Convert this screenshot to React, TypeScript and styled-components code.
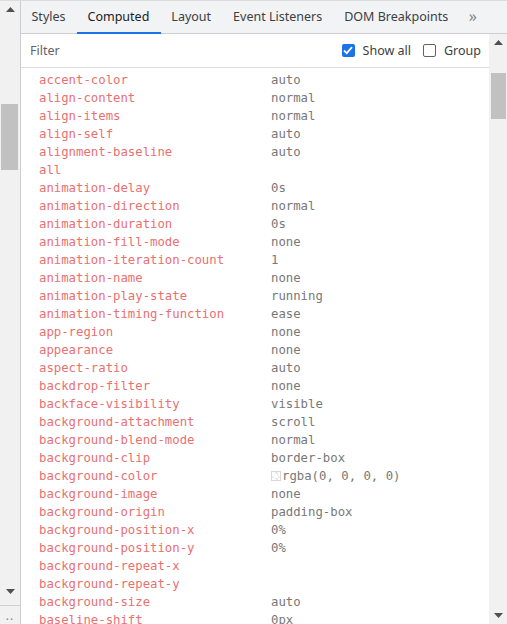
import styled, { createGlobalStyle } from 'styled-components';

const GlobalStyle = createGlobalStyle`
  html, body {
    margin: 0;
    padding: 0;
    background: #ffffff;
  }
  body {
    font-family: "Noto Sans", "Open Sans", sans-serif;
    overflow: hidden;
  }
`;

const tabs = ['Styles', 'Computed', 'Layout', 'Event Listeners', 'DOM Breakpoints'];

const props: [string, string, boolean?][] = [
  ['accent-color', 'auto'],
  ['align-content', 'normal'],
  ['align-items', 'normal'],
  ['align-self', 'auto'],
  ['alignment-baseline', 'auto'],
  ['all', ''],
  ['animation-delay', '0s'],
  ['animation-direction', 'normal'],
  ['animation-duration', '0s'],
  ['animation-fill-mode', 'none'],
  ['animation-iteration-count', '1'],
  ['animation-name', 'none'],
  ['animation-play-state', 'running'],
  ['animation-timing-function', 'ease'],
  ['app-region', 'none'],
  ['appearance', 'none'],
  ['aspect-ratio', 'auto'],
  ['backdrop-filter', 'none'],
  ['backface-visibility', 'visible'],
  ['background-attachment', 'scroll'],
  ['background-blend-mode', 'normal'],
  ['background-clip', 'border-box'],
  ['background-color', 'rgba(0, 0, 0, 0)', true],
  ['background-image', 'none'],
  ['background-origin', 'padding-box'],
  ['background-position-x', '0%'],
  ['background-position-y', '0%'],
  ['background-repeat-x', ''],
  ['background-repeat-y', ''],
  ['background-size', 'auto'],
  ['baseline-shift', '0px'],
];

const Arrow = ({ down }: { down?: boolean }) => (
  <svg width="9" height="6" viewBox="0 0 9 6">
    <path d={down ? 'M0 0 H9 L4.5 5 Z' : 'M0 5 H9 L4.5 0 Z'} fill="#505050" />
  </svg>
);

const App = () => {
  return (
    <Page>
      <GlobalStyle />
      <Gutter>
        <ArrowBox>
          <Arrow />
        </ArrowBox>
        <Track>
          <Thumb $top={86} $height={66} />
        </Track>
        <ArrowBox>
          <Arrow down />
        </ArrowBox>
        <GutterFoot>
          <Dots>··</Dots>
        </GutterFoot>
      </Gutter>
      <Main>
        <TabBar>
          {tabs.map((t) => (
            <Tab key={t} $active={t === 'Computed'}>
              {t}
            </Tab>
          ))}
          <More>»</More>
        </TabBar>
        <Body>
          <Content>
            <FilterRow>
              <FilterText>Filter</FilterText>
              <Options>
                <CheckLabel>
                  <CheckBox $checked>
                    <svg width="10" height="9" viewBox="0 0 10 9">
                      <path d="M1 4.5 L3.8 7.2 L9 1.2" stroke="#fff" strokeWidth="1.8" fill="none" />
                    </svg>
                  </CheckBox>
                  Show all
                </CheckLabel>
                <CheckLabel>
                  <CheckBox />
                  Group
                </CheckLabel>
              </Options>
            </FilterRow>
            <List>
              {props.map(([name, value, swatch]) => (
                <Row key={name}>
                  <PropName>{name}</PropName>
                  <PropValue>
                    {swatch && <Swatch />}
                    {value}
                  </PropValue>
                </Row>
              ))}
            </List>
          </Content>
          <VScroll>
            <ArrowBox>
              <Arrow />
            </ArrowBox>
            <Track>
              <Thumb $top={22} $height={46} $right />
            </Track>
            <ArrowBox>
              <Arrow down />
            </ArrowBox>
          </VScroll>
        </Body>
      </Main>
    </Page>
  );
};

export default App;

const Page = styled.div`
  display: flex;
  width: 507px;
  height: 624px;
  overflow: hidden;
  border-top: 1px solid #dadce0;
  box-sizing: border-box;
`;

const Gutter = styled.div`
  width: 20px;
  flex-shrink: 0;
  display: flex;
  flex-direction: column;
  background: #f1f1f1;
  border-right: 1px solid #cbcdd1;
`;

const ArrowBox = styled.div`
  height: 17px;
  display: flex;
  align-items: center;
  justify-content: center;
  flex-shrink: 0;
`;

const Track = styled.div`
  position: relative;
  flex: 1;
`;

const Thumb = styled.div<{ $top: number; $height: number; $right?: boolean }>`
  position: absolute;
  left: ${(p) => (p.$right ? '2px' : '1px')};
  right: ${(p) => (p.$right ? '1px' : '2px')};
  top: ${(p) => p.$top}px;
  height: ${(p) => p.$height}px;
  background: #c1c1c1;
`;

const GutterFoot = styled.div`
  height: 18px;
  border-top: 1px solid #d0d0d0;
  margin-top: 5px;
  display: flex;
  align-items: flex-end;
  justify-content: center;
`;

const Dots = styled.span`
  font-size: 12px;
  color: #888;
  line-height: 8px;
  letter-spacing: 1px;
`;

const Main = styled.div`
  flex: 1;
  display: flex;
  flex-direction: column;
  min-width: 0;
`;

const TabBar = styled.div`
  height: 32px;
  flex-shrink: 0;
  display: flex;
  align-items: stretch;
  background: #f1f3f4;
  border-bottom: 1px solid #cbcdd1;
`;

const Tab = styled.div<{ $active?: boolean }>`
  display: flex;
  align-items: center;
  padding: 0 11.5px 0 10.5px;
  font-size: 12.5px;
  color: ${(p) => (p.$active ? '#202124' : '#3c4043')};
  border-bottom: 2px solid ${(p) => (p.$active ? '#1a73e8' : 'transparent')};
  margin-bottom: -1px;
  white-space: nowrap;
`;

const More = styled.div`
  display: flex;
  align-items: center;
  padding: 0 10px 2px 9px;
  font-size: 16px;
  color: #80868b;
`;

const Body = styled.div`
  flex: 1;
  display: flex;
  min-height: 0;
`;

const Content = styled.div`
  flex: 1;
  display: flex;
  flex-direction: column;
  min-width: 0;
`;

const FilterRow = styled.div`
  height: 33px;
  flex-shrink: 0;
  display: flex;
  align-items: center;
  padding: 0 8px 0 9px;
  border-bottom: 1px solid #dadce0;
`;

const FilterText = styled.span`
  flex: 1;
  font-size: 12.5px;
  color: #5f6368;
`;

const Options = styled.div`
  display: flex;
  align-items: center;
  gap: 12px;
`;

const CheckLabel = styled.label`
  display: flex;
  align-items: center;
  gap: 8px;
  font-size: 12.5px;
  color: #3c4043;
`;

const CheckBox = styled.span<{ $checked?: boolean }>`
  width: 13px;
  height: 13px;
  box-sizing: border-box;
  border-radius: 2px;
  display: flex;
  align-items: center;
  justify-content: center;
  background: ${(p) => (p.$checked ? '#1a73e8' : '#fff')};
  border: ${(p) => (p.$checked ? 'none' : '1.5px solid #5f6368')};
`;

const List = styled.div`
  padding-top: 3px;
  overflow: hidden;
`;

const Row = styled.div`
  display: flex;
  height: 18px;
  align-items: center;
  padding-left: 18px;
  font-family: "DejaVu Sans Mono", "Liberation Mono", monospace;
  font-size: 12.3px;
  white-space: nowrap;
`;

const PropName = styled.span`
  width: 232px;
  flex-shrink: 0;
  color: #e97070;
`;

const PropValue = styled.span`
  display: flex;
  align-items: center;
  color: #787878;
`;

const Swatch = styled.span`
  width: 10px;
  height: 10px;
  margin-right: 1px;
  box-sizing: border-box;
  border: 1px solid #d8d8d8;
  background: linear-gradient(45deg, #e8e8e8 25%, #fff 25%, #fff 75%, #e8e8e8 75%);
  background-size: 6px 6px;
`;

const VScroll = styled.div`
  width: 18px;
  flex-shrink: 0;
  display: flex;
  flex-direction: column;
  background: #f1f1f1;
`;
